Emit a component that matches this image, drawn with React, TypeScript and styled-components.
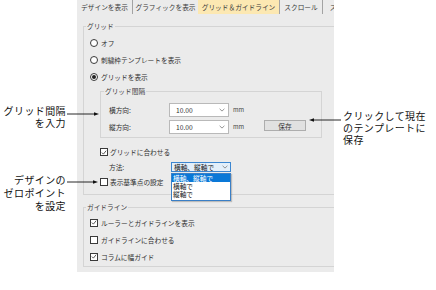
import React from 'react';
import styled, {createGlobalStyle} from 'styled-components';

const GlobalStyle = createGlobalStyle`
  html, body {
    margin: 0;
    padding: 0;
    background: #fff;
  }
  body {
    font-family: "Noto Sans CJK JP", "Noto Sans", sans-serif;
  }
`;

const tabs = [
  {label: 'デザインを表示', w: 56, sep: true},
  {label: 'グラフィックを表示', w: 65},
  {label: 'グリッド＆ガイドライン', w: 82, active: true, sep: true},
  {label: 'スクロール', w: 43, sep: true},
  {label: 'スナップ', w: 40},
];

const Chevron = () => (
  <svg width="6" height="4" viewBox="0 0 6 4">
    <path d="M0.6 0.8L3 3.1L5.4 0.8" stroke="#7a7a7a" strokeWidth="0.8" fill="none" />
  </svg>
);

const Check = ({checked}: {checked?: boolean}) => (
  <CheckBox>
    {checked && (
      <svg width="7" height="7" viewBox="0 0 7 7">
        <path d="M1 3.6L2.8 5.4L6 1.4" stroke="#2a2a2a" strokeWidth="0.9" fill="none" />
      </svg>
    )}
  </CheckBox>
);

const Arrow = ({dir, width}: {dir: 'left' | 'right'; width: number}) => (
  <svg width={width} height="6" viewBox={`0 0 ${width} 6`}>
    {dir === 'right' ? (
      <>
        <line x1="0" y1="3" x2={width - 4} y2="3" stroke="#111" strokeWidth="0.9" />
        <path d={`M${width - 5} 1.2L${width} 3L${width - 5} 4.8Z`} fill="#111" />
      </>
    ) : (
      <>
        <line x1="4" y1="3" x2={width} y2="3" stroke="#111" strokeWidth="0.9" />
        <path d="M5 1.2L0 3L5 4.8Z" fill="#111" />
      </>
    )}
  </svg>
);

const App = () => {
  return (
    <Stage>
      <GlobalStyle />
      <Panel>
        <TabBar>
          {tabs.map(t => (
            <Tab key={t.label} $w={t.w} $active={t.active} $sep={t.sep}>
              {t.label}
            </Tab>
          ))}
        </TabBar>
        <Body>
          <Group $pad={6}>
            <GroupTitle $shift={-4}>グリッド</GroupTitle>
            <RadioRow $first>
              <Radio />
              <span>オフ</span>
            </RadioRow>
            <RadioRow>
              <Radio />
              <span>刺繍枠テンプレートを表示</span>
            </RadioRow>
            <RadioRow>
              <Radio $on />
              <span>グリッドを表示</span>
            </RadioRow>
            <InnerGroup>
              <GroupTitle $shift={-5}>グリッド間隔</GroupTitle>
              <FieldRow $first>
                <FieldLabel>横方向:</FieldLabel>
                <Input>
                  <span>10.00</span>
                  <Chevron />
                </Input>
                <Unit>mm</Unit>
              </FieldRow>
              <FieldRow>
                <FieldLabel>縦方向:</FieldLabel>
                <Input>
                  <span>10.00</span>
                  <Chevron />
                </Input>
                <Unit>mm</Unit>
                <Button>保存</Button>
              </FieldRow>
            </InnerGroup>
            <CheckRow $indent={10} $first>
              <Check checked />
              <span>グリッドに合わせる</span>
            </CheckRow>
            <CheckRow $indent={19}>
              <FieldLabel $w={60}>方法:</FieldLabel>
              <ComboWrap>
                <Combo>
                  <span>横軸、縦軸で</span>
                  <Chevron />
                </Combo>
                <Popup>
                  <PopupItem $hi>横軸、縦軸で</PopupItem>
                  <PopupItem>横軸で</PopupItem>
                  <PopupItem>縦軸で</PopupItem>
                </Popup>
              </ComboWrap>
            </CheckRow>
            <CheckRow $indent={10}>
              <Check />
              <span>表示基準点の設定</span>
            </CheckRow>
          </Group>
          <Group $pad={6} $gapTop>
            <GroupTitle $shift={-4}>ガイドライン</GroupTitle>
            <RadioRow $first $tight>
              <Check checked />
              <span>ルーラーとガイドラインを表示</span>
            </RadioRow>
            <RadioRow>
              <Check />
              <span>ガイドラインに合わせる</span>
            </RadioRow>
            <RadioRow>
              <Check checked />
              <span>コラムに幅ガイド</span>
            </RadioRow>
          </Group>
        </Body>
      </Panel>

      <Callout style={{left: 0, top: 105}}>
        <CalloutText $align="right" $w={66}>
          グリッド間隔
          <br />
          を入力
        </CalloutText>
        <ArrowSlot $x={67} $y={5}>
          <Arrow dir="right" width={32} />
        </ArrowSlot>
      </Callout>

      <Callout style={{left: 0, top: 173}}>
        <CalloutText $align="right" $w={66} $lh={13}>
          デザインの
          <br />
          ゼロポイント
          <br />
          を設定
        </CalloutText>
        <ArrowSlot $x={67} $y={5}>
          <Arrow dir="right" width={31} />
        </ArrowSlot>
      </Callout>

      <Callout style={{left: 343, top: 110}}>
        <CalloutText $align="left" $w={92}>
          クリックして現在
          <br />
          のテンプレートに
          <br />
          保存
        </CalloutText>
        <ArrowSlot $x={-34} $y={6}>
          <Arrow dir="left" width={32} />
        </ArrowSlot>
      </Callout>
    </Stage>
  );
};

const Stage = styled.div`
  position: relative;
  width: 436px;
  height: 290px;
  overflow: hidden;
  display: flex;
  align-items: flex-start;
  padding-left: 77px;
  box-sizing: border-box;
  background: #fff;
`;

const Panel = styled.div`
  width: 257px;
  height: 272px;
  flex-shrink: 0;
  background: #ebebeb;
  overflow: hidden;
  display: flex;
  flex-direction: column;
  font-size: 6.7px;
  line-height: 8px;
  color: #2e2e2e;
`;

const TabBar = styled.div`
  display: flex;
  height: 14px;
  flex-shrink: 0;
`;

const Tab = styled.div<{$w: number; $active?: boolean; $sep?: boolean}>`
  flex: 0 0 ${p => p.$w}px;
  box-sizing: border-box;
  display: flex;
  align-items: center;
  justify-content: center;
  background: ${p => (p.$active ? '#fce8b2' : 'transparent')};
  border-right: ${p => (p.$sep ? '1px solid #a3a3a3' : 'none')};
  color: #3a3a3a;
  white-space: nowrap;
  overflow: hidden;
`;

const Body = styled.div`
  padding: 12px 0 5px 6px;
  display: flex;
  flex-direction: column;
`;

const Group = styled.div<{$pad: number; $gapTop?: boolean}>`
  width: 270px;
  box-sizing: border-box;
  border: 1px solid #d4d4d4;
  padding: 0 0 5px ${p => p.$pad}px;
  margin-top: ${p => (p.$gapTop ? 12 : 0)}px;
  display: flex;
  flex-direction: column;
  &:last-child {
    padding-bottom: 1px;
  }
`;

const GroupTitle = styled.div<{$shift: number}>`
  align-self: flex-start;
  margin: -5px 0 0 ${p => p.$shift}px;
  padding: 0 1px;
  height: 8px;
  line-height: 8px;
  background: #ebebeb;
  color: #3a3a3a;
`;

const RadioRow = styled.div<{$first?: boolean; $tight?: boolean}>`
  display: flex;
  align-items: center;
  gap: 3px;
  height: 17px;
  margin-top: ${p => (p.$first ? (p.$tight ? 3 : 4) : 0)}px;
  white-space: nowrap;
`;

const Radio = styled.span<{$on?: boolean}>`
  width: 8px;
  height: 8px;
  box-sizing: border-box;
  border-radius: 50%;
  border: 1px solid #3a3a3a;
  background: #fff;
  display: flex;
  align-items: center;
  justify-content: center;
  &::after {
    content: '';
    width: 4px;
    height: 4px;
    border-radius: 50%;
    background: ${p => (p.$on ? '#222' : 'transparent')};
  }
`;

const CheckBox = styled.span`
  width: 8px;
  height: 8px;
  box-sizing: border-box;
  border: 1px solid #3a3a3a;
  background: #fff;
  display: flex;
  align-items: center;
  justify-content: center;
  flex-shrink: 0;
`;

const InnerGroup = styled.div`
  width: 222px;
  box-sizing: border-box;
  margin: 6px 0 0 10px;
  border: 1px solid #d4d4d4;
  padding: 0 0 3px 8px;
  display: flex;
  flex-direction: column;
`;

const FieldRow = styled.div<{$first?: boolean}>`
  display: flex;
  align-items: center;
  height: 14px;
  margin-top: ${p => (p.$first ? 8 : 3)}px;
`;

const FieldLabel = styled.span<{$w?: number}>`
  width: ${p => p.$w ?? 60}px;
  flex-shrink: 0;
  white-space: nowrap;
`;

const Input = styled.div`
  width: 60px;
  height: 14px;
  box-sizing: border-box;
  border: 1px solid #b9b9b9;
  background: #fff;
  display: flex;
  align-items: center;
  justify-content: space-between;
  padding: 0 3px 0 6px;
  color: #333;
`;

const Unit = styled.span`
  width: 35px;
  padding-left: 4px;
  box-sizing: border-box;
  font-size: 6px;
  color: #444;
`;

const Button = styled.div`
  width: 42px;
  height: 11px;
  align-self: flex-start;
  box-sizing: border-box;
  border: 1px solid #adadad;
  background: #e1e1e1;
  display: flex;
  align-items: center;
  justify-content: center;
  color: #333;
`;

const CheckRow = styled.div<{$indent: number; $first?: boolean}>`
  display: flex;
  align-items: center;
  gap: 2px;
  height: 14px;
  margin: ${p => (p.$first ? 7 : 1)}px 0 0 ${p => p.$indent}px;
  white-space: nowrap;
`;

const ComboWrap = styled.div`
  position: relative;
`;

const Combo = styled.div`
  width: 60px;
  height: 10px;
  box-sizing: border-box;
  border: 1px solid #3c86d0;
  background: #e3effa;
  display: flex;
  align-items: center;
  justify-content: space-between;
  padding: 0 2px 0 2px;
  color: #222;
`;

const Popup = styled.div`
  position: absolute;
  left: 0;
  top: 11px;
  width: 60px;
  box-sizing: border-box;
  border: 1px solid #3a7fc6;
  background: #fff;
  box-shadow: 1px 1px 1px rgba(0, 0, 0, 0.2);
  padding-bottom: 2px;
  z-index: 2;
`;

const PopupItem = styled.div<{$hi?: boolean}>`
  height: 8px;
  line-height: 8px;
  padding-left: 1px;
  background: ${p => (p.$hi ? '#0a78d7' : 'transparent')};
  color: ${p => (p.$hi ? '#fff' : '#222')};
`;

const Callout = styled.div`
  position: absolute;
`;

const CalloutText = styled.div<{$align: 'left' | 'right'; $w: number; $lh?: number}>`
  width: ${p => p.$w}px;
  text-align: ${p => p.$align};
  font-size: 10px;
  line-height: ${p => p.$lh ?? 12}px;
  letter-spacing: 0.4px;
  color: #111;
  white-space: nowrap;
`;

const ArrowSlot = styled.div<{$x: number; $y: number}>`
  position: absolute;
  left: ${p => p.$x}px;
  top: ${p => p.$y}px;
  line-height: 0;
`;

export default App;
